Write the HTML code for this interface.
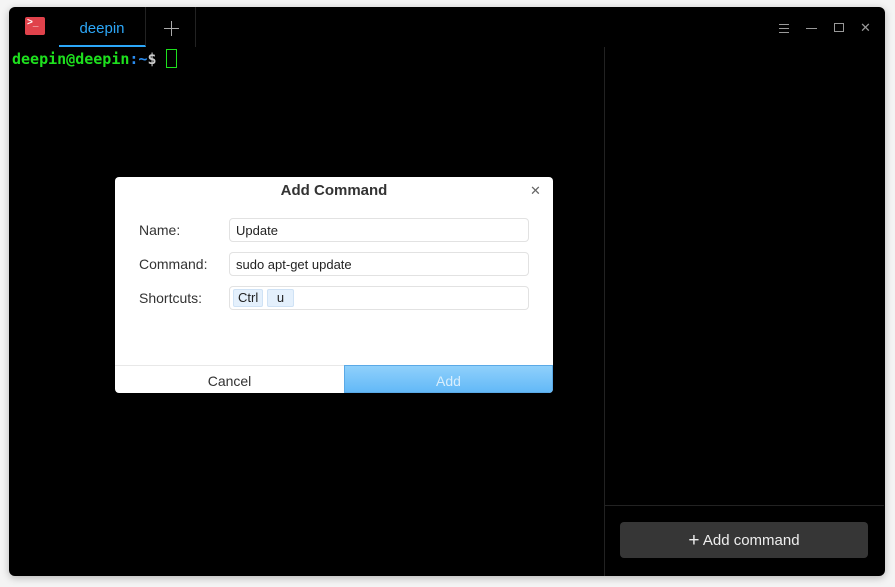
<!DOCTYPE html>
<html><head><style>
body{margin:0;width:895px;height:587px;background:#f4f4f4;position:relative;overflow:hidden;font-family:"Liberation Sans","DejaVu Sans",sans-serif}
.win{position:absolute;left:9px;top:7px;width:876px;height:569px;background:#000;border-radius:6px;box-shadow:0 2px 8px rgba(0,0,0,.25)}
.a{position:absolute}
.term{font-family:"DejaVu Sans Mono","Liberation Mono",monospace;font-size:15px;font-weight:bold;color:#1ee01e}
.dlg{position:absolute;left:115px;top:177px;width:438px;height:216px;background:#fff;border-radius:4px;overflow:hidden}
.lbl{position:absolute;left:24px;font-size:14px;color:#333}
.inp{position:absolute;left:114px;width:298px;height:22px;border:1px solid #e2e2e2;border-radius:4px;font-size:13px;color:#222;line-height:24px;padding-left:6px;box-sizing:content-box}
.key{display:inline-block;background:#e4f0fc;border:1px solid #cfe2f5;border-radius:2px;height:16px;line-height:16px;padding:0 4px;margin-top:2px;font-size:13px}
</style></head><body>
<div class="win">
  <div class="a" style="left:16px;top:10px;width:20px;height:18px;background:#e0424b;border-radius:2px;color:#fff;font-size:10px;font-weight:bold;line-height:12px;padding-left:2px;box-sizing:border-box">&gt;_</div>
  <div class="a" style="left:50px;top:0;width:87px;height:40px;border-right:1px solid #222;border-bottom:2px solid #2ca7f8;box-sizing:border-box;color:#2ca7f8;font-size:15px;text-align:center;line-height:44px">deepin</div>
  <div class="a" style="left:155px;top:21px;width:15px;height:1px;background:#aaa"></div>
  <div class="a" style="left:162px;top:14px;width:1px;height:15px;background:#aaa"></div>
  <div class="a" style="left:186px;top:0;width:1px;height:40px;background:#222"></div>
  <div class="a" style="left:770px;top:17px;width:10px;height:1px;background:#999;box-shadow:0 4px 0 #999,0 8px 0 #999"></div>
  <div class="a" style="left:797px;top:21px;width:11px;height:1px;background:#999"></div>
  <div class="a" style="left:825px;top:16px;width:8px;height:7px;border:1px solid #999"></div>
  <div class="a" style="left:851px;top:13px;color:#999;font-size:13px;line-height:15px">✕</div>
  <div class="a term" style="left:3px;top:42px"><span>deepin@deepin</span><span style="color:#2a8cf0">:~</span><span style="color:#ccc">$</span> <span style="display:inline-block;width:9px;height:17px;border:1px solid #1ee01e;vertical-align:-4px"></span></div>
  <div class="a" style="left:595px;top:40px;width:1px;height:529px;background:#222"></div>
  <div class="a" style="left:596px;top:498px;width:279px;height:1px;background:#222"></div>
  <div class="a" style="left:611px;top:515px;width:248px;height:36px;background:#363636;border-radius:4px;color:#eee;font-size:15px;text-align:center;line-height:38px"><span style="font-size:19px;vertical-align:-1px">+</span> Add command</div>
</div>
<div class="dlg">
  <div class="a" style="left:0;width:438px;top:5px;text-align:center;font-size:15px;font-weight:bold;color:#333">Add Command</div>
  <div class="a" style="left:415px;top:6px;font-size:13px;color:#666">✕</div>
  <div class="lbl" style="top:45px">Name:</div>
  <div class="lbl" style="top:79px">Command:</div>
  <div class="lbl" style="top:113px">Shortcuts:</div>
  <div class="inp" style="top:41px;width:292px">Update</div>
  <div class="inp" style="top:75px;width:292px">sudo apt-get update</div>
  <div class="inp" style="top:109px;width:295px;padding-left:3px;line-height:20px"><span class="key">Ctrl</span> <span class="key" style="padding:0 9px">u</span></div>
  <div class="a" style="left:0;top:188px;width:229px;height:28px;border-top:1px solid #e8e8e8;text-align:center;line-height:31px;font-size:14px;color:#333">Cancel</div>
  <div class="a" style="left:229px;top:188px;width:209px;height:28px;background:linear-gradient(#8fd0fb,#63b9f7);border:1px solid #5aa9e6;box-sizing:border-box;text-align:center;line-height:30px;font-size:14px;color:#d8eefc">Add</div>
</div>
</body></html>
